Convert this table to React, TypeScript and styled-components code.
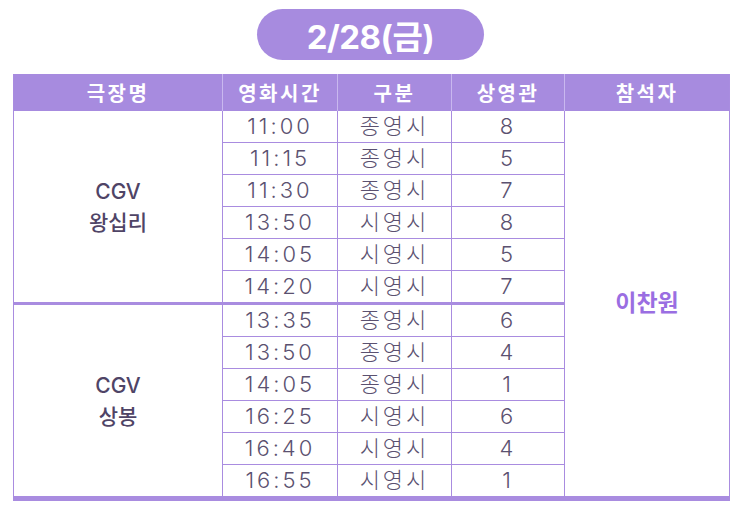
import React from "react";
import styled, { createGlobalStyle } from "styled-components";

const PURPLE = "#a78bdf";
const LINE = "#a98ce0";
const FONT = `"Inter", "Noto Sans CJK KR", sans-serif`;

type Show = { time: string; kind: string; hall: string };
type Theater = { brand: string; name: string; shows: Show[] };

const theaters: Theater[] = [
  {
    brand: "CGV",
    name: "왕십리",
    shows: [
      { time: "11:00", kind: "종영시", hall: "8" },
      { time: "11:15", kind: "종영시", hall: "5" },
      { time: "11:30", kind: "종영시", hall: "7" },
      { time: "13:50", kind: "시영시", hall: "8" },
      { time: "14:05", kind: "시영시", hall: "5" },
      { time: "14:20", kind: "시영시", hall: "7" },
    ],
  },
  {
    brand: "CGV",
    name: "상봉",
    shows: [
      { time: "13:35", kind: "종영시", hall: "6" },
      { time: "13:50", kind: "종영시", hall: "4" },
      { time: "14:05", kind: "종영시", hall: "1" },
      { time: "16:25", kind: "시영시", hall: "6" },
      { time: "16:40", kind: "시영시", hall: "4" },
      { time: "16:55", kind: "시영시", hall: "1" },
    ],
  },
];

const totalRows = theaters.reduce((n, t) => n + t.shows.length, 0);

const GlobalStyle = createGlobalStyle`
  html, body { margin: 0; padding: 0; background: #ffffff; }
  body { font-family: ${FONT}; }
`;

const Page = styled.div`
  width: 750px;
  height: 516px;
  display: flex;
  flex-direction: column;
  align-items: flex-start;
  padding: 9px 0 0 13px;
  box-sizing: border-box;
`;

const DatePill = styled.div`
  width: 227px;
  height: 51px;
  margin: 0 0 14px 244px;
  border-radius: 26px;
  background: ${PURPLE};
  color: #ffffff;
  display: flex;
  align-items: center;
  justify-content: center;
  font-family: ${FONT};
  font-weight: 700;
  font-size: 33px;
  letter-spacing: -0.5px;
`;

const Table = styled.table`
  width: 716px;
  border-collapse: collapse;
  table-layout: fixed;
  border-bottom: 5px solid ${LINE};
`;

const HeadCell = styled.th<{ $w: number }>`
  width: ${(p) => p.$w}px;
  height: 37px;
  padding: 0;
  background: ${PURPLE};
  color: #ffffff;
  font-weight: 700;
  font-size: 20px;
  letter-spacing: 2.5px;
  border-left: 1px solid #c9b8ef;
  &:first-child { border-left: 1px solid ${LINE}; }
  &:last-child { border-right: 1px solid ${LINE}; }
`;

const Row = styled.tr<{ $groupEnd: boolean }>`
  border-bottom: ${(p) => (p.$groupEnd ? `3px solid ${LINE}` : `1px solid ${LINE}`)};
`;

const Cell = styled.td`
  height: 31px;
  padding: 0;
  text-align: center;
  color: #5b5170;
  font-weight: 300;
  font-size: 22px;
  line-height: 31px;
  letter-spacing: 3px;
  border: 1px solid ${LINE};
  border-top: none;
  border-bottom: none;
`;

const TheaterCell = styled(Cell)`
  color: #4f4466;
  font-weight: 500;
  font-size: 21px;
  line-height: 31px;
  letter-spacing: 0;
`;

const AttendeeCell = styled(Cell)`
  color: #9a6ee2;
  font-weight: 700;
  font-size: 23px;
  letter-spacing: 0;
  border-right: 1px solid ${LINE};
`;

export default function App() {
  return (
    <>
      <GlobalStyle />
      <Page>
        <DatePill>2/28(금)</DatePill>
        <Table>
          <thead>
            <tr>
              <HeadCell $w={208}>극장명</HeadCell>
              <HeadCell $w={114}>영화시간</HeadCell>
              <HeadCell $w={113}>구분</HeadCell>
              <HeadCell $w={112}>상영관</HeadCell>
              <HeadCell $w={164}>참석자</HeadCell>
            </tr>
          </thead>
          <tbody>
            {theaters.map((t, ti) =>
              t.shows.map((s, si) => (
                <Row
                  key={`${ti}-${si}`}
                  $groupEnd={si === t.shows.length - 1 && ti < theaters.length - 1}
                >
                  {si === 0 && (
                    <TheaterCell rowSpan={t.shows.length}>
                      {t.brand}
                      <br />
                      {t.name}
                    </TheaterCell>
                  )}
                  <Cell>{s.time}</Cell>
                  <Cell>{s.kind}</Cell>
                  <Cell>{s.hall}</Cell>
                  {ti === 0 && si === 0 && (
                    <AttendeeCell rowSpan={totalRows}>이찬원</AttendeeCell>
                  )}
                </Row>
              ))
            )}
          </tbody>
        </Table>
      </Page>
    </>
  );
}
